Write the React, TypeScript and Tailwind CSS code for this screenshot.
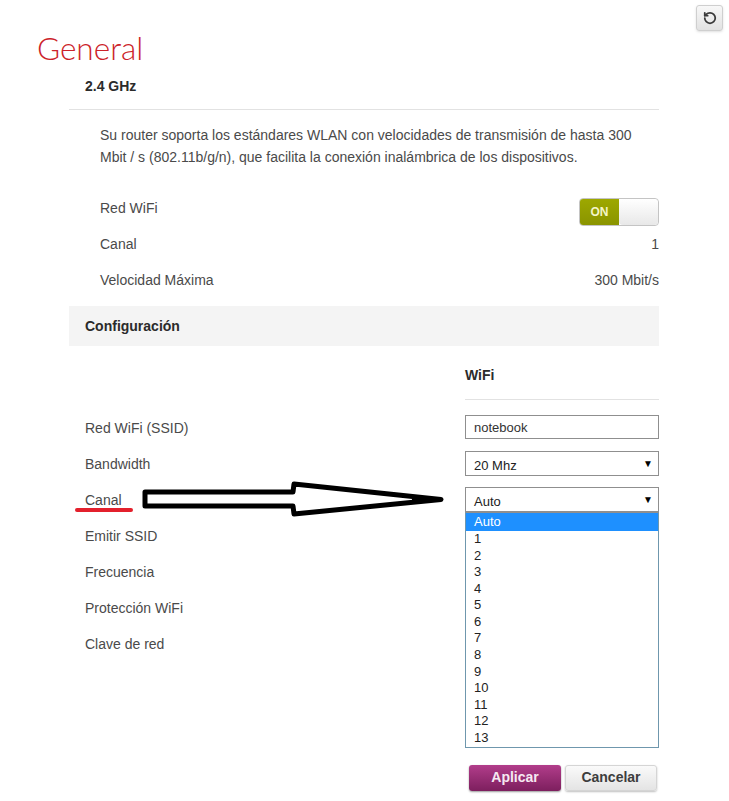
import { RotateCcw } from "lucide-react";

const channels = ["1", "2", "3", "4", "5", "6", "7", "8", "9", "10", "11", "12", "13"];

const info = [
  { label: "Canal", value: "1" },
  { label: "Velocidad Máxima", value: "300 Mbit/s" },
];

function FormRow({ label, children }: { label: string; children?: React.ReactNode }) {
  return (
    <div className="flex h-9 items-center justify-between pl-4">
      <span className="pt-[2px]">{label}</span>
      {children && <div className="w-[194px]">{children}</div>}
    </div>
  );
}

function FakeSelect({ value }: { value: string }) {
  return (
    <div className="flex h-[25px] items-center justify-between border border-[#8f8f8f] pr-[5px] pl-2 text-[13px] text-[#222]">
      <span className="pt-[4px] leading-none">{value}</span>
      <span className="text-[10px] text-black">▼</span>
    </div>
  );
}

export default function App() {
  return (
    <div className="relative h-[801px] w-[729px] overflow-hidden bg-white font-['Liberation_Sans',Arial,sans-serif] text-[14px] text-[#4a4a4a]">
      <div className="flex justify-end pt-[5px] pr-1.5">
        <button className="flex h-[26px] w-[27px] items-center justify-center rounded-[3px] border border-[#cfcfcf] bg-gradient-to-b from-[#f8f8f8] to-[#e2e2e2] shadow-sm">
          <RotateCcw className="size-[14px] text-[#3a3a3a]" strokeWidth={3} />
        </button>
      </div>

      <h1 className="mt-[-2px] pl-[37px] font-['Lato',sans-serif] text-[31.5px] leading-[38px] font-light text-[#cc2229]">General</h1>

      <div className="mr-[70px] ml-[69px]">
        <h2 className="mt-[11px] border-b border-[#e2e2e2] pb-[14px] pl-4 text-[14px] leading-[17px] font-bold text-[#2b2b2b]">2.4 GHz</h2>

        <p className="mt-[14px] pr-4 pl-[31px] text-[14px] leading-[22px]">
          Su router soporta los estándares WLAN con velocidades de transmisión de hasta 300 Mbit / s (802.11b/g/n), que facilita la conexión inalámbrica de los dispositivos.
        </p>

        <div className="mt-[22px] pl-[31px]">
          <div className="flex h-9 items-center justify-between">
            <span>Red WiFi</span>
            <div className="mt-2 flex h-7 w-20 overflow-hidden rounded-[4px] border border-[#c4c4c4]">
              <div className="flex w-[39px] items-center justify-center bg-gradient-to-b from-[#9da800] to-[#8a9400] text-[12px] font-bold text-[#f4f5c8]">ON</div>
              <div className="flex-1 rounded-[4px] bg-gradient-to-b from-white to-[#e8e8e8]" />
            </div>
          </div>
          {info.map((row) => (
            <div key={row.label} className="flex h-9 items-center justify-between">
              <span>{row.label}</span>
              <span>{row.value}</span>
            </div>
          ))}
        </div>

        <div className="mt-2 flex h-10 items-center bg-[#f4f4f4] pl-4 text-[14px] font-bold text-[#2b2b2b]">Configuración</div>

        <div className="mt-[19px] ml-[396px] border-b border-[#e2e2e2] pb-[14px] text-[14px] leading-[20px] font-bold text-[#2b2b2b]">WiFi</div>

        <div className="mt-[9px]">
          <FormRow label="Red WiFi (SSID)">
            <div className="flex h-[24px] items-center border border-[#8f8f8f] pl-2 text-[13px] text-[#333]">
              <span className="leading-none">notebook</span>
            </div>
          </FormRow>
          <FormRow label="Bandwidth">
            <FakeSelect value="20 Mhz" />
          </FormRow>
          <FormRow label="Canal">
            <FakeSelect value="Auto" />
          </FormRow>
          <FormRow label="Emitir SSID" />
          <FormRow label="Frecuencia" />
          <FormRow label="Protección WiFi" />
          <FormRow label="Clave de red" />
        </div>
      </div>

      {/* lista abierta del select */}
      <ul className="absolute top-[512px] left-[465px] h-[236px] w-[194px] border border-[#6f97ad] border-t-[#8f8f8f] bg-white text-[13px] leading-[16.58px] text-[#222]">
        <li className="h-[18px] bg-[#1e90ff] pl-2 leading-[18px] text-white">Auto</li>
        {channels.map((ch) => (
          <li key={ch} className="pl-2">{ch}</li>
        ))}
      </ul>

      <div className="absolute top-[765px] left-[469px] flex gap-1">
        <button className="h-[26px] w-[92px] rounded-[3px] bg-gradient-to-b from-[#b23d8b] to-[#7d1f5e] pb-[2px] text-[14px] font-bold text-[#f6e9f2] shadow-[0_1px_2px_rgba(0,0,0,0.4)]">Aplicar</button>
        <button className="h-[26px] w-[92px] rounded-[3px] border border-[#d5d5d5] bg-gradient-to-b from-[#fafafa] to-[#e4e4e4] pb-[2px] text-[14px] font-bold text-[#3d3d3d] shadow-[0_1px_2px_rgba(0,0,0,0.25)]">Cancelar</button>
      </div>

      {/* anotaciones dibujadas encima */}
      <svg className="pointer-events-none absolute inset-0" width="729" height="801" viewBox="0 0 729 801">
        <path d="M77 510 H131" stroke="#e3202c" strokeWidth="4" strokeLinecap="round" fill="none" />
        <path
          d="M145 492 H293 L294 484 L441 499.5 L294 514 L293 506 H145 Z"
          fill="#fff"
          stroke="#000"
          strokeWidth="5"
          strokeLinejoin="round"
        />
        <path d="M412 497 L443 499.5 L412 502 Z" fill="#000" />
      </svg>
    </div>
  );
}
